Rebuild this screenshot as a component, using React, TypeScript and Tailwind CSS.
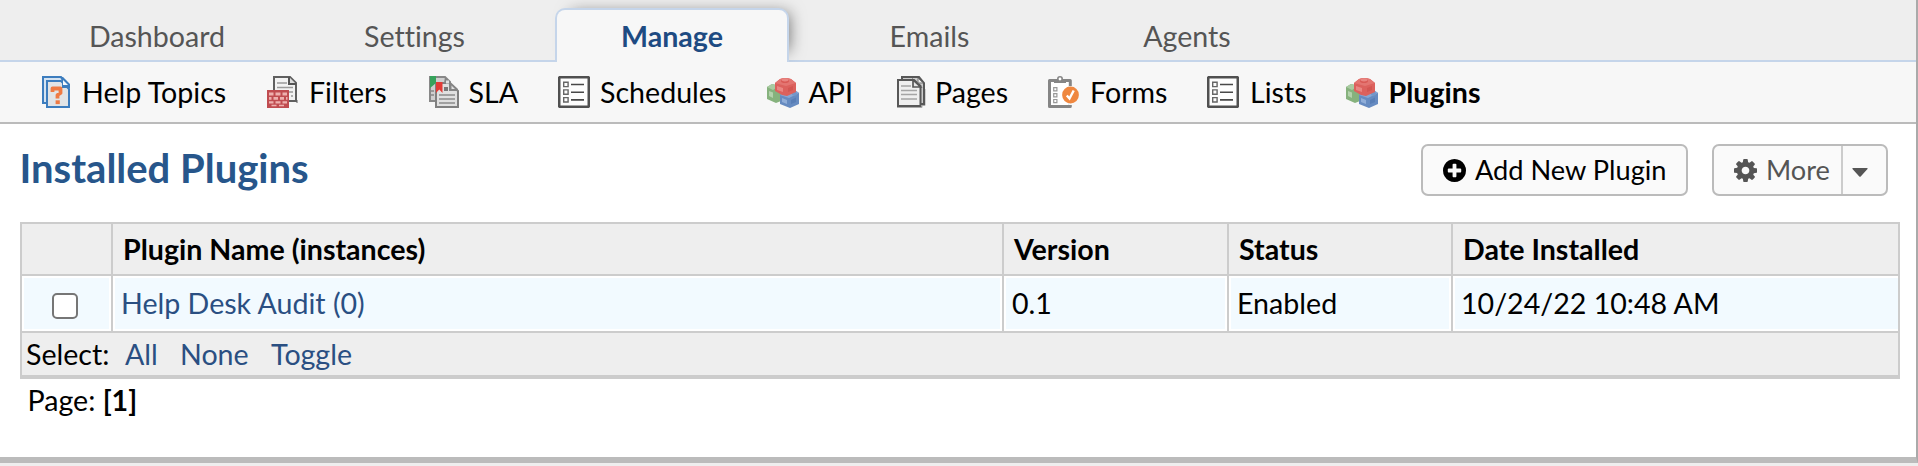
import type { ReactNode } from 'react'

function Icon({ children }: { children: ReactNode }) {
  return (
    <svg viewBox="0 0 32 32" className="h-8 w-8 shrink-0" fill="none">
      {children}
    </svg>
  )
}

const HelpIcon = () => (
  <Icon>
    <path d="M3 1H21L26 6V27H3Z" fill="#d5e3f1" stroke="#3d7dbe" strokeWidth="2" />
    <path d="M7 5H21L29 13V31H7Z" fill="#e2e4e6" stroke="#3d7dbe" strokeWidth="2" />
    <path d="M20 1H23L30 8V12H22V5Z" fill="#3d7dbe" />
    <path d="M23 4V9H28Z" fill="#f4f8fc" />
    <path d="M12.500 16V12.500H20.500V17L17.500 19V22.500" stroke="#ef7a43" strokeWidth="3.800" strokeLinejoin="round" />
    <path d="M15.600 24.300h4.200v3.800h-4.200z" fill="#ef7a43" />
  </Icon>
)

const FilterIcon = () => (
  <Icon>
    <path d="M10 27H31V24H29V27Z" fill="#aaa" />
    <path d="M7 1H23L29 7V25H7Z" fill="#f3f3f3" stroke="#606060" strokeWidth="2" />
    <path d="M22 1V8H29" fill="#ddd" stroke="#555" strokeWidth="2" />
    <path d="M10 7H20M10 11.5H26M22 16H26M24 20H26" stroke="#9b9b9b" strokeWidth="1.6" />
    <path d="M0 14H22V32H0Z" fill="#c04c50" />
    <path d="M2 16.500h4.500v3h-4.500zM8.500 16.500h5v3h-5zM15.500 16.500h4.500v3h-4.500zM2 21h2.500v2.800h-2.500zM6.500 21h4.500v2.800h-4.500zM13 21h4v2.800h-4zM19 21h1.500v2.800h-1.500zM2 25.300h4.500v2.300h-4.500zM8.500 25.300h5v2.300h-5zM15.500 25.300h4.500v2.300h-4.500zM4.500 28.800h5v1.500h-5zM12 28.800h5v1.500h-5z" fill="#eeb0ae" />
  </Icon>
)

const SlaIcon = () => (
  <Icon>
    <path d="M3 1H18L23 6V25H3Z" fill="#cfcfcf" stroke="#888" strokeWidth="2" />
    <path d="M4 15H7M4 19H7" stroke="#888" strokeWidth="1.5" />
    <path d="M9 7H22L31 15V31H9Z" fill="#e0e0e0" stroke="#808080" strokeWidth="2" />
    <path d="M18 1L31 13V15H22V7H17Z" fill="#858585" />
    <path d="M19 4.500h3v3h-3zM24.500 9.500V13H28Z" fill="#e0e0e0" />
    <path d="M17 11h4v4h-4z" fill="#777" />
    <path d="M12 19H28M12 23H28M12 27H28" stroke="#8a8a8a" strokeWidth="1.7" />
    <path d="M3 0H9V7L5.500 10L3 12Z" fill="#37a35c" />
    <path d="M9 6H15.500V17L12.300 13.500L9 17Z" fill="#e23b36" />
  </Icon>
)

const ListIcon = () => (
  <Icon>
    <rect x="1.200" y="1.200" width="29.600" height="29.600" rx="0.800" fill="#fdfdfd" stroke="#505050" strokeWidth="2.600" />
    <path d="M5.700 6.200h4.400v4.400H5.700zM5.700 13.900h4.400v4.400H5.700zM5.700 21.600h4.400v4.400H5.700z" stroke="#666" strokeWidth="1.400" />
    <path d="M13 8.500H26M13 16.200H26M13 23.900H26" stroke="#484848" strokeWidth="1.600" />
  </Icon>
)

const BlocksIcon = () => (
  <Icon>
    <g className="blur-[0.6px]">
      <path d="M0 11L5 8L14 10V25L9 27L0 23Z" fill="#86b27d" />
      <path d="M0 11L5 8L12 10L6 14Z" fill="#a9cba2" />
      <path d="M2 15L6 16.500V22L2 20Z" fill="#b3d2ac" />
      <path d="M13 19L19 15H29L32 17V28L23 32L13 28Z" fill="#668bc1" />
      <path d="M13 19L22 22L32 17L28 14L19 16Z" fill="#86a7d5" />
      <path d="M15 22L20 24V28L15 26Z" fill="#8fadd8" />
      <path d="M24 24L29 21.500V26L24 28Z" fill="#587eb6" />
      <path d="M25 16.500Q28 15 30 17V19Q27 20.500 25 19Z" fill="#7397c9" />
      <path d="M8 7L13 3Q18 1 24 3L29 7V16L20 20L15 19L8 15Z" fill="#dc615d" />
      <path d="M8 7L13 3Q18 1 24 3L29 7L19 10Z" fill="#e37571" />
      <path d="M10 10L16 12V16L10 14Z" fill="#e98682" />
      <path d="M21 12L26 10V14L21 16Z" fill="#d35652" />
      <ellipse cx="18" cy="5" rx="4" ry="2" fill="#d95a56" />
      <ellipse cx="18" cy="4" rx="3.400" ry="1.400" fill="#e98682" />
    </g>
  </Icon>
)

const PagesIcon = () => (
  <Icon>
    <path d="M2 31.500H27V29.500H30V13" stroke="#aaa" strokeWidth="1" />
    <path d="M7 1H24L29 7V28H7Z" fill="#ccc" stroke="#585858" strokeWidth="2" />
    <path d="M3 4H19L25.500 10V30H3Z" fill="#efefef" stroke="#585858" strokeWidth="2" />
    <path d="M18 4V11H25.500Z" fill="#e6e6e6" stroke="#585858" strokeWidth="1.700" />
    <path d="M23 2V7H28Z" fill="#eee" stroke="#777" strokeWidth="1" />
    <path d="M6 10H16M6 14.500H22M6 18.500H22M6 23H22" stroke="#a5a5a5" strokeWidth="1.500" />
  </Icon>
)

const FormsIcon = () => (
  <Icon>
    <path d="M2.500 4.500H23.300V30.500H2.500Z" fill="#fff" stroke="#858585" strokeWidth="3" strokeLinejoin="round" />
    <path d="M21.700 10h4v19h-4z" fill="#f7f7f7" />
    <path d="M7 3H19V7H7Z" fill="#858585" />
    <circle cx="13" cy="3" r="2.200" fill="#fff" stroke="#858585" strokeWidth="1.600" />
    <path d="M6.700 11.700h3.200v3.200H6.700zM6.700 17.600h3.200v3.200H6.700zM6.700 23.500h3.200v3.200H6.700z" stroke="#999" strokeWidth="1.200" />
    <circle cx="23.500" cy="19" r="8.400" fill="#ef873f" />
    <path d="M19.800 19.500L22.500 22.500L26.700 14.500" stroke="#fff" strokeWidth="2.400" />
  </Icon>
)

const subnav = [
  { label: 'Help Topics', icon: <HelpIcon />, width: 'w-[227px]', gap: 'gap-[10px]' },
  { label: 'Filters', icon: <FilterIcon />, width: 'w-[160px]', gap: 'gap-[10px]' },
  { label: 'SLA', icon: <SlaIcon />, width: 'w-[131px]', gap: 'gap-[9.5px]' },
  { label: 'Schedules', icon: <ListIcon />, width: 'w-[209px]', gap: 'gap-[10px]' },
  { label: 'API', icon: <BlocksIcon />, width: 'w-[128px]', gap: 'gap-[9.5px]' },
  { label: 'Pages', icon: <PagesIcon />, width: 'w-[152px]', gap: 'gap-[8px]' },
  { label: 'Forms', icon: <FormsIcon />, width: 'w-[160px]', gap: 'gap-[11px]' },
  { label: 'Lists', icon: <ListIcon />, width: 'w-[139px]', gap: 'gap-[11px]' },
  { label: 'Plugins', icon: <BlocksIcon />, width: 'w-[160px] font-bold', gap: 'gap-[10.5px]' },
]

const tabs = ['Dashboard', 'Settings', 'Manage', 'Emails', 'Agents']

const th = 'border-r-2 border-[#ccc] pl-[10px] flex items-center'
const td = 'border-r-2 border-[#ccc] flex'
const tdInner = 'm-[2px] flex flex-1 items-center bg-[#f2faff] pl-[6px] pb-[2px]'
const cols = 'grid grid-cols-[91px_891px_225px_224px_447px]'

export default function App() {
  return (
    <div className="flex h-[466px] w-[1918px] flex-col overflow-hidden bg-[#eee] font-['Lato','Noto_Sans',sans-serif] text-[28.6px] leading-[34px] whitespace-nowrap text-black [font-variant-ligatures:none]">
      <div className="flex h-[463px] flex-col border-r-2 border-b-[6px] border-r-[#aaa] border-b-[#bbb] bg-white">
        <nav className="flex h-[62px] shrink-0 items-end gap-[23.5px] border-b-2 border-[#c5d5ea] bg-[#eee] pl-[40px]">
          {tabs.map((t) =>
            t === 'Manage' ? (
              <a key={t} className="-mb-[2px] flex h-[54px] w-[234px] items-center justify-center rounded-t-[10px] border-2 border-b-0 border-[#c5d5ea] bg-[#f7f7f7] font-bold text-[#1e4b82] shadow-[8px_-3px_16px_-8px_rgba(0,0,0,0.55)]">
                {t}
              </a>
            ) : (
              <a key={t} className="flex h-[48px] w-[234px] items-center justify-center text-[#555]">
                {t}
              </a>
            ),
          )}
        </nav>
        <nav className="relative flex h-[62px] shrink-0 items-center border-b-2 border-[#bbb] bg-[#f7f7f7] pl-[40px]">
          {subnav.map((s) => (
            <a key={s.label} className={`flex items-center ${s.width} ${s.gap}`}>
              {s.icon}
              <span>{s.label}</span>
            </a>
          ))}
        </nav>

        <header className="flex h-[98px] shrink-0 items-start justify-between pr-[28px] pl-[19.5px]">
          <h2 className="mt-[20px] text-[40px] leading-[48px] font-bold text-[#27568b]">Installed Plugins</h2>
          <div className="mt-[20px] flex gap-[24px] text-[27.2px]">
            <button className="flex h-[52px] w-[267px] items-center rounded-[7px] border-2 border-[#bbb] bg-[#fafafa] pl-[20px]">
              <svg viewBox="128 128 1536 1536" className="mr-[9px] h-[23px] w-[23px]">
                <path d="M1344 960v-128q0-26-19-45t-45-19h-256v-256q0-26-19-45t-45-19h-128q-26 0-45 19t-19 45v256h-256q-26 0-45 19t-19 45v128q0 26 19 45t45 19h256v256q0 26 19 45t45 19h128q26 0 45-19t19-45v-256h256q26 0 45-19t19-45zm320-64q0 209-103 385.500t-279.500 279.500-385.500 103-385.500-103-279.500-279.500-103-385.500 103-385.500 279.500-279.500 385.500-103 385.500 103 279.500 279.500 103 385.500z" />
              </svg>
              Add New Plugin
            </button>
            <button className="flex h-[52px] w-[176px] items-center rounded-[7px] border-2 border-[#bbb] bg-[#fafafa] pl-[20px] text-[#555]">
              <svg viewBox="0 128 1536 1536" className="mr-[9px] h-[23px] w-[23px]" fill="#555">
                <path d="M1024 896q0-106-75-181t-181-75-181 75-75 181 75 181 181 75 181-75 75-181zm512-109v222q0 12-8 23t-20 13l-185 28q-19 54-39 91 35 50 107 138 10 12 10 25t-9 23q-27 37-99 108t-94 71q-12 0-26-9l-138-108q-44 23-91 38-16 136-29 186-7 28-36 28h-222q-14 0-24.500-8.500t-11.500-21.500l-28-184q-49-16-90-37l-141 107q-10 9-25 9-14 0-25-11-126-114-165-168-7-10-7-23 0-12 8-23 15-21 51-66.500t54-70.500q-27-50-41-99l-183-27q-13-2-21-12.500t-8-23.500v-222q0-12 8-23t19-13l186-28q14-46 39-92-40-57-107-138-10-12-10-24 0-10 9-23 26-36 98.500-107.500t94.500-71.500q13 0 26 10l138 107q44-23 91-38 16-136 29-186 7-28 36-28h222q14 0 24.500 8.500t11.500 21.500l28 184q49 16 90 37l142-107q9-9 24-9 13 0 25 10 129 119 165 170 7 8 7 22 0 12-8 23-15 21-51 66.500t-54 70.500q26 50 41 98l183 28q13 2 21 12.500t8 23.500z" />
              </svg>
              <span className="w-[75px] text-left">More</span>
              <span className="flex h-[48px] flex-1 items-center border-l-2 border-[#ccc] pl-[9px]">
                <svg viewBox="0 0 16 9" className="mt-[4px] h-[9px] w-[16px]">
                  <path d="M0.800 0H15.200Q16 0.500 15.500 1L8.700 8.500Q8 9 7.300 8.500L0.500 1Q0 0.500 0.800 0Z" fill="#555" />
                </svg>
              </span>
            </button>
          </div>
        </header>

        <section className="mr-[16px] ml-[20px] flex h-[157px] shrink-0 flex-col border-2 border-b-4 border-[#ccc]">
          <div className={`${cols} h-[52px] shrink-0 border-b-2 border-[#ccc] bg-[#eee] font-bold`}>
            <div className={th} />
            <div className={th}>Plugin Name (instances)</div>
            <div className={th}>Version</div>
            <div className={th}>Status</div>
            <div className="flex items-center pl-[10px]">Date Installed</div>
          </div>
          <div className={`${cols} h-[57px] shrink-0 border-b-2 border-[#ccc]`}>
            <div className={td}>
              <div className="m-[2px] flex flex-1 items-center bg-[#f2faff] pt-[4px] pl-[28px]">
                <input type="checkbox" className="h-[26px] w-[26px] appearance-none rounded-[5px] border-2 border-[#767676] bg-white" />
              </div>
            </div>
            <div className={td}>
              <a className={`${tdInner} text-[#2a4f82]`}>Help Desk Audit (0)</a>
            </div>
            <div className={td}>
              <div className={tdInner}>0.1</div>
            </div>
            <div className={td}>
              <div className={tdInner}>Enabled</div>
            </div>
            <div className="flex">
              <div className={tdInner}>10/24/22 10:48 AM</div>
            </div>
          </div>
          <div className="flex flex-1 items-center bg-[#eee] pl-[4px] text-[#2a4f82]">
            <span className="w-[99px] text-black">Select:</span>
            <a className="w-[55px]">All</a>
            <a className="w-[91px]">None</a>
            <a>Toggle</a>
          </div>
        </section>
        <div className="mt-[4px] pl-[27.5px]">
          Page: <b>[1]</b>
        </div>
      </div>
    </div>
  )
}
